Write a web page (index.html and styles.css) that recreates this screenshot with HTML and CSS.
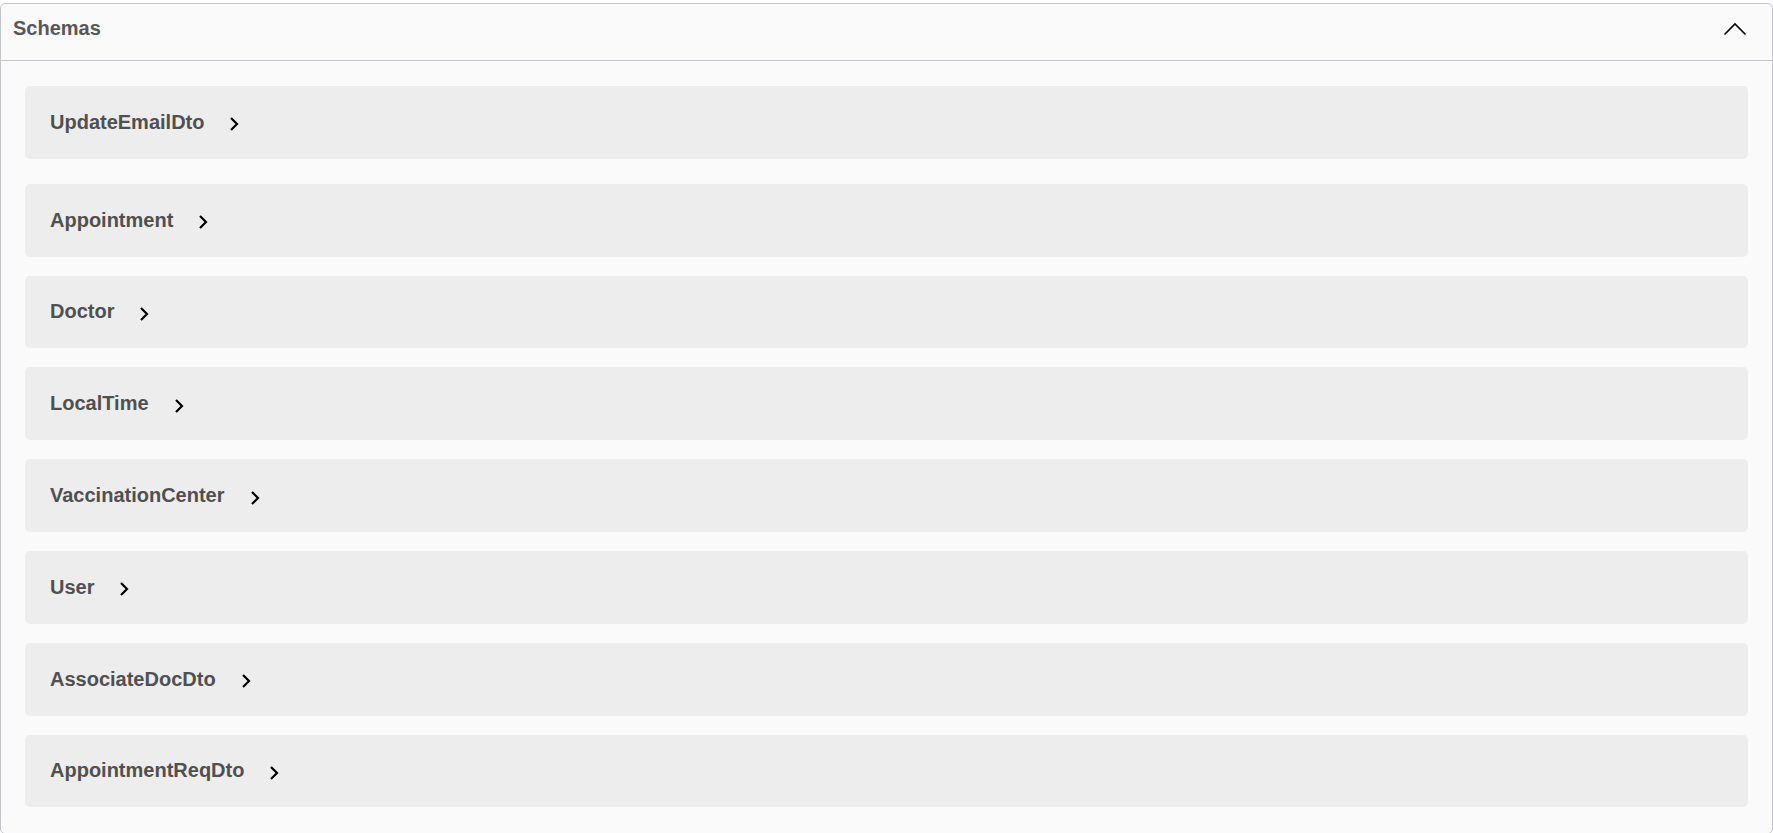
FILE: index.html
```html
<!DOCTYPE html>
<html>
<head>
<meta charset="utf-8">
<link rel="stylesheet" href="styles.css">
</head>
<body>
<section class="models">
  <h4 class="models-head">
    <span class="models-title">Schemas</span>
    <svg class="up-arrow" width="24" height="14" viewBox="0 0 24 14"><polyline points="1.5,12.5 12,2 22.5,12.5" fill="none" stroke="#000" stroke-width="1.6"/></svg>
  </h4>
  <div class="model-list">
    <div class="model-row first"><span class="model-title">UpdateEmailDto</span><svg class="chev" width="10" height="20" viewBox="0 0 10 20"><polyline points="2,6 8,12 2,18" fill="none" stroke="#000" stroke-width="2.2"/></svg></div>
    <div class="model-row"><span class="model-title">Appointment</span><svg class="chev" width="10" height="20" viewBox="0 0 10 20"><polyline points="2,6 8,12 2,18" fill="none" stroke="#000" stroke-width="2.2"/></svg></div>
    <div class="model-row"><span class="model-title">Doctor</span><svg class="chev" width="10" height="20" viewBox="0 0 10 20"><polyline points="2,6 8,12 2,18" fill="none" stroke="#000" stroke-width="2.2"/></svg></div>
    <div class="model-row"><span class="model-title">LocalTime</span><svg class="chev" width="10" height="20" viewBox="0 0 10 20"><polyline points="2,6 8,12 2,18" fill="none" stroke="#000" stroke-width="2.2"/></svg></div>
    <div class="model-row"><span class="model-title">VaccinationCenter</span><svg class="chev" width="10" height="20" viewBox="0 0 10 20"><polyline points="2,6 8,12 2,18" fill="none" stroke="#000" stroke-width="2.2"/></svg></div>
    <div class="model-row"><span class="model-title">User</span><svg class="chev" width="10" height="20" viewBox="0 0 10 20"><polyline points="2,6 8,12 2,18" fill="none" stroke="#000" stroke-width="2.2"/></svg></div>
    <div class="model-row"><span class="model-title">AssociateDocDto</span><svg class="chev" width="10" height="20" viewBox="0 0 10 20"><polyline points="2,6 8,12 2,18" fill="none" stroke="#000" stroke-width="2.2"/></svg></div>
    <div class="model-row"><span class="model-title">AppointmentReqDto</span><svg class="chev" width="10" height="20" viewBox="0 0 10 20"><polyline points="2,6 8,12 2,18" fill="none" stroke="#000" stroke-width="2.2"/></svg></div>
  </div>
</section>
</body>
</html>
```
FILE: styles.css
```css
html, body {
  margin: 0;
  padding: 0;
  background: #ffffff;
  font-family: "Liberation Sans", Arial, sans-serif;
}

.models {
  margin-top: 3px;
  border: 1px solid #c5c7cc;
  border-radius: 5px;
  background: #fafafa;
  padding-bottom: 26px;
  box-sizing: border-box;
}

.models-head {
  margin: 0;
  height: 57px;
  box-sizing: border-box;
  border-bottom: 1px solid #c5c7cc;
  display: flex;
  align-items: flex-start;
  padding: 13px 25px 0 12px;
}

.models-title {
  flex: 1;
  font-size: 20px;
  line-height: 23px;
  font-weight: bold;
  color: #585858;
}

.up-arrow {
  margin-top: 5px;
  display: block;
}

.model-list {
  display: flex;
  flex-direction: column;
  padding: 25px 24px 0;
}

.model-row {
  height: 72.8px;
  background: #ededed;
  border-radius: 5px;
  display: flex;
  align-items: center;
  padding-left: 25px;
  margin-bottom: 19px;
}

.model-row.first {
  margin-bottom: 25px;
}

.model-row:last-child {
  margin-bottom: 0;
}

.model-title {
  font-size: 20px;
  line-height: 23px;
  font-weight: bold;
  color: #505050;
}

.chev {
  display: block;
  margin-left: 25px;
}
```
